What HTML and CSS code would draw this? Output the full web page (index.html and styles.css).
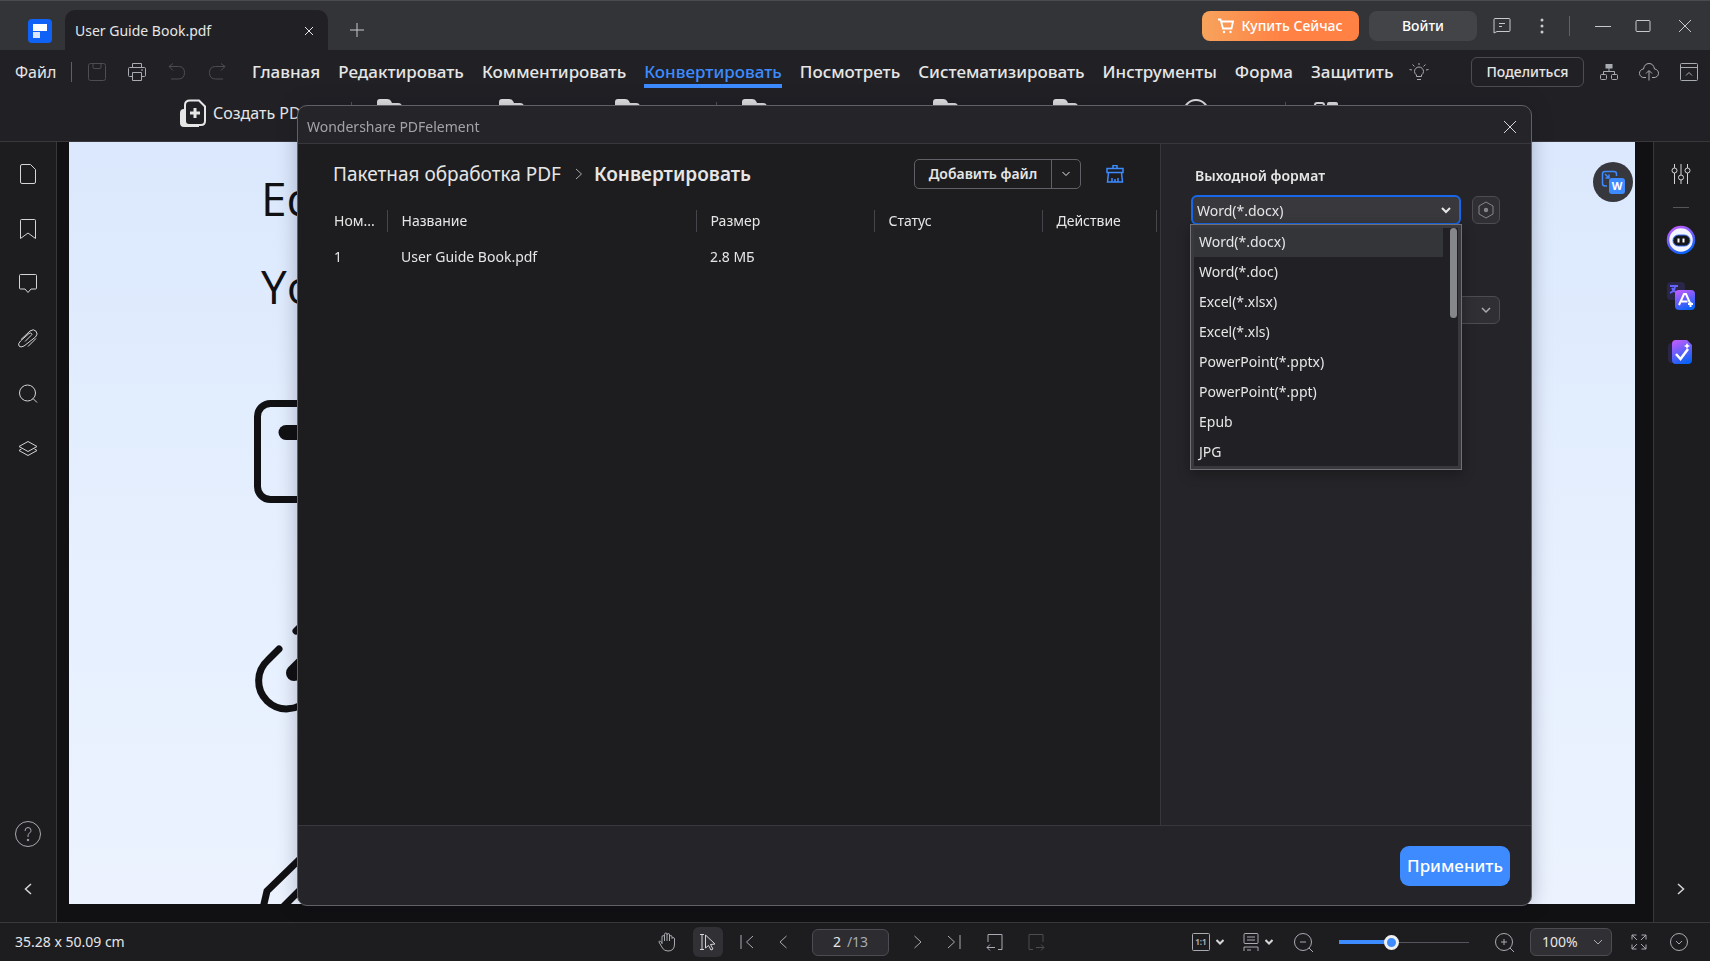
FILE: index.html
```html
<!DOCTYPE html>
<html lang="ru">
<head>
    <meta charset="UTF-8">
    <meta name="viewport" content="width=device-width, initial-scale=1.0">
    <title>Wondershare PDFelement</title>
    <link rel="stylesheet" href="styles.css">
</head>
<body>
<div class="app">
    <!-- Заголовок окна -->
    <header class="titlebar">
        <svg class="logo" viewBox="0 0 24 24"><rect width="24" height="24" rx="4" fill="#0f62f5"/><path d="M5 5h14v7H5z" fill="#fff"/><path d="M5 13h7v6H5z" fill="#dbe7ff"/></svg>
        <div class="tab">
            <span>User Guide Book.pdf</span>
            <button class="tab-close" aria-label="Закрыть вкладку"><svg class="icon" width="10" height="10" viewBox="0 0 10 10"><path d="M1 1l8 8M9 1L1 9"/></svg></button>
        </div>
        <button class="tab-add" aria-label="Новая вкладка"><svg class="icon" width="14" height="14" viewBox="0 0 14 14"><path d="M7 0v14M0 7h14"/></svg></button>
        <div class="window-tools">
            <button class="buy"><svg class="icon" width="16" height="16" viewBox="0 0 16 16"><path d="M0 1.500h2.500l2.500 9h8.500l1.500-7H3.500" stroke-width="1.800"/><circle cx="6" cy="14" r="1.200" fill="#fff" stroke="none"/><circle cx="12.500" cy="14" r="1.200" fill="#fff" stroke="none"/></svg>Купить Сейчас</button>
            <button class="login">Войти</button>
            <button class="tool-chat" aria-label="Сообщения"><svg class="icon" width="18" height="18" viewBox="0 0 18 18"><path d="M1 16V2.500q0-1 1-1h14q1 0 1 1v11q0 1-1 1H4zM6 6.500h6M6 9.500h3"/></svg></button>
            <button class="tool-dots" aria-label="Ещё"><svg width="4" height="16" viewBox="0 0 4 16" fill="currentColor"><circle cx="2" cy="2" r="1.500"/><circle cx="2" cy="8" r="1.500"/><circle cx="2" cy="14" r="1.500"/></svg></button>
            <span class="divider"></span>
            <button class="window-min" aria-label="Свернуть"><svg class="icon" width="16" height="16" viewBox="0 0 16 16"><path d="M0 8.500h16"/></svg></button>
            <button class="window-max" aria-label="Развернуть"><svg class="icon" width="16" height="16" viewBox="0 0 16 16"><rect x="1" y="2.500" width="14" height="11" rx="1"/></svg></button>
            <button class="window-close" aria-label="Закрыть"><svg class="icon" width="14" height="14" viewBox="0 0 14 14"><path d="M1 1l12 12M13 1L1 13"/></svg></button>
        </div>
    </header>

    <!-- Меню -->
    <div class="menubar">
        <button class="file">Файл</button>
        <span class="divider"></span>
        <div class="quick">
            <button class="off" aria-label="Сохранить"><svg class="icon" width="18" height="18" viewBox="0 0 18 18"><rect x=".5" y=".5" width="17" height="17" rx="2"/><path d="M5 .500v4q0 1 1 1h6q1 0 1-1v-4"/></svg></button>
            <button aria-label="Печать"><svg class="icon" width="18" height="18" viewBox="0 0 18 18"><path d="M4.500 4.500v-4h9v4M4.500 13.500h-3q-1 0-1-1v-7q0-1 1-1h15q1 0 1 1v7q0 1-1 1h-3M4.500 9.500h9v8h-9zM13 7h2"/></svg></button>
            <button class="off" aria-label="Отменить"><svg class="icon" width="18" height="18" viewBox="0 0 18 18"><path d="M5 .500l-4 3 4 4M1 3.500h9.500q6 0 6 6.200t-6 6.300H3"/></svg></button>
            <button class="off" aria-label="Повторить"><svg class="icon" width="18" height="18" viewBox="0 0 18 18"><path d="M13 .500l4 3-4 4M17 3.500H7.500q-6 0-6 6.200t6 6.300H15"/></svg></button>
        </div>
        <nav class="menu">
            <a href="#">Главная</a>
            <a href="#">Редактировать</a>
            <a href="#">Комментировать</a>
            <a href="#" class="active">Конвертировать</a>
            <a href="#">Посмотреть</a>
            <a href="#">Систематизировать</a>
            <a href="#">Инструменты</a>
            <a href="#">Форма</a>
            <a href="#">Защитить</a>
        </nav>
        <button class="tips" aria-label="Подсказки"><svg class="icon" width="20" height="20" viewBox="0 0 20 20"><path d="M7.500 14.500v-1.500Q5.500 11.500 5.500 9.500a4.500 4.500 0 0 1 9 0q0 2-2 3.500v1.500zM8 17.500h4M10 1v2M3.500 2.500l2 2M16.500 2.500l-2 2M.500 7.500l2.500.500M19.500 7.500l-2.500.500"/></svg></button>
        <div class="menu-right">
            <button class="share">Поделиться</button>
            <button aria-label="Структура"><svg class="icon" width="18" height="18" viewBox="0 0 18 18"><rect x="6" y="1.500" width="6" height="3.500" fill="currentColor"/><rect x=".5" y="11.500" width="6" height="5" rx="1"/><rect x="11.500" y="11.500" width="6" height="5" rx="1"/><path d="M9 5v3.500M3.500 11.500v-3h11v3"/></svg></button>
            <button aria-label="Облако"><svg class="icon" width="20" height="20" viewBox="0 0 20 20"><path d="M7 15.500H5A4.200 4.200 0 0 1 4.500 7Q5.500 1.500 10 1.500T15.500 7A4.200 4.200 0 0 1 15 15.500h-2M10 18.500V9M7 11.500L10 8.500l3 3"/></svg></button>
            <button aria-label="Скрыть панель"><svg class="icon" width="18" height="18" viewBox="0 0 18 18"><rect x=".5" y=".5" width="17" height="17" rx="1"/><path d="M.500 4.500h17M6 12.500l3-3 3 3"/></svg></button>
        </div>
    </div>

    <!-- Лента инструментов -->
    <div class="ribbon">
        <button class="create"><svg width="26" height="28" viewBox="0 0 26 28"><path d="M5 10H4q-4 0-4 4v10q0 4 4 4h15v-2H9q-4 0-4-4z" fill="#e6e6e6"/><path d="M10 1.500h9l6 6V22q0 4-4 4H9q-4 0-4-4V6q0-4.500 5-4.500z" fill="#212125" stroke="#e6e6e6" stroke-width="2"/><path d="M15 9v10M10 14h10" stroke="#e6e6e6" stroke-width="3"/></svg>Создать PDF</button>
        <svg class="ribbon-icons" width="994" height="28" viewBox="0 0 994 28" fill="#e6e6e6">
            <path id="folder" d="M30 27V3q0-3 3-3h7q3 0 4 2l1 2h6q4 0 4 4v19z"/>
            <use href="#folder" x="122"/><use href="#folder" x="238"/><use href="#folder" x="365"/><use href="#folder" x="556"/><use href="#folder" x="676"/>
            <circle cx="849" cy="13" r="12" fill="none" stroke="#e6e6e6" stroke-width="2"/>
            <rect x="968" y="4" width="9" height="9" rx="2" fill="none" stroke="#e6e6e6" stroke-width="2"/><rect x="980" y="3" width="11" height="11" rx="2"/>
            <path d="M4 3h1v20H4zM369 3h1v20h-1zM938 3h1v20h-1z" fill="#55565b"/>
        </svg>
    </div>

    <div class="workspace">
        <!-- Левая панель -->
        <aside class="rail rail-left">
            <button aria-label="Миниатюры"><svg class="icon" width="20" height="22" viewBox="0 0 20 22"><path d="M4 1.500h8.500l5 5V19q0 1.500-1.500 1.500H4Q2.500 20.500 2.500 19V3Q2.500 1.500 4 1.500z"/></svg></button>
            <button aria-label="Закладки"><svg class="icon" width="20" height="22" viewBox="0 0 20 22"><path d="M2.500 20.500V2.500q0-1 1-1h13q1 0 1 1v18L10 15z"/></svg></button>
            <button aria-label="Комментарии"><svg class="icon" width="20" height="22" viewBox="0 0 20 22"><path d="M2.500 1.500h15q1 0 1 1V15q0 1-1 1H13l-3 3.500L7 16H2.500q-1 0-1-1V2.500q0-1 1-1z"/></svg></button>
            <button aria-label="Вложения"><svg class="icon" width="22" height="22" viewBox="0 0 22 22"><path d="M8 13.500l6-6q1.500-1 .5-2t-2.500 0L3.500 13q-3 3-1.500 5t5 0L18.500 9q3-3 .5-5.800t-6-.2L4 11.500M11 18.500l8-8"/></svg></button>
            <button aria-label="Поиск"><svg class="icon" width="20" height="22" viewBox="0 0 20 22"><circle cx="9.500" cy="10" r="8"/><path d="M15 15.500l4 4"/></svg></button>
            <button aria-label="Слои"><svg class="icon" width="22" height="22" viewBox="0 0 22 22"><path d="M11 3.500l9 5-9 5-9-5zM4.500 11L2 12.500l9 5 9-5-2.500-1.500"/></svg></button>
            <button class="help" aria-label="Справка"><svg class="icon" width="26" height="26" viewBox="0 0 26 26"><circle cx="13" cy="13" r="12.500"/><path d="M10 10q0-3.500 3-3.500t3 3q0 1.500-1.500 2.500T13 15v1"/><circle cx="13" cy="19" r=".8" fill="currentColor"/></svg></button>
            <button aria-label="Свернуть панель"><svg class="icon" width="8" height="12" viewBox="0 0 8 12"><path d="M7 1L1.500 6 7 11" stroke-width="1.500"/></svg></button>
        </aside>

        <!-- Страница документа -->
        <main class="viewer">
            <div class="page">
                <p>Ed</p>
                <p>Yo</p>
                <svg width="140" height="514" viewBox="240 390 140 514" fill="none" stroke="#111113" stroke-width="7">
                    <rect x="257.500" y="403.500" width="110" height="96" rx="13"/>
                    <path d="M286 432.500h50" stroke-width="15" stroke-linecap="round"/>
                    <path d="M279 649l-11 11A28 28 0 1 0 308 699M296 631l10-10" stroke-linecap="round"/>
                    <path d="M294 673l14-14" stroke-width="16" stroke-linecap="round"/>
                    <path d="M340 820l-73 71-7 30M350 840l-71 71"/>
                </svg>
            </div>
            <button class="to-word" aria-label="В Word"><svg width="40" height="40" viewBox="0 0 40 40"><path d="M14 24h-2q-2.500 0-2.500-2.500V12q0-2.500 2.500-2.500h9q2.500 0 2.500 2.500v2M12 12l4 4M16 12.500V16h-3.500" fill="none" stroke="#3d8bff" stroke-width="1.500"/><rect x="16" y="16" width="16" height="16" rx="3" fill="#3d8bff"/><text x="24" y="28" text-anchor="middle">W</text></svg></button>
        </main>

        <!-- Правая панель -->
        <aside class="rail rail-right">
            <svg width="0" height="0" class="defs"><defs><linearGradient id="violet" x1="0.200" y1="0" x2="0.600" y2="1"><stop offset="0" stop-color="#c05cff"/><stop offset="1" stop-color="#0b62f6"/></linearGradient></defs></svg>
            <button aria-label="Настройки"><svg class="icon" width="20" height="22" viewBox="0 0 20 22"><path d="M3.500 1v4M3.500 10v11M10 1v11M10 17v4M16.500 1v4M16.500 10v11"/><circle cx="3.500" cy="7.500" r="2.500"/><circle cx="10" cy="14.500" r="2.500"/><circle cx="16.500" cy="7.500" r="2.500"/></svg></button>
            <hr>
            <button aria-label="AI помощник"><svg width="30" height="30" viewBox="0 0 30 30"><circle cx="15" cy="15" r="13" fill="#f2f4ff" stroke="url(#violet)" stroke-width="2.500"/><rect x="7" y="10" width="17" height="11" rx="5.500" fill="#15151c" stroke="#326bf5"/><path d="M12.500 13.500v4M17.500 13.500v4" stroke="#fff" stroke-width="2"/></svg></button>
            <button aria-label="AI перевод"><svg width="28" height="28" viewBox="0 0 28 28"><rect width="18" height="18" rx="4" fill="#29264a"/><path d="M3 4h8M8 4q0 5-5 7M5 6q2 4 6 5" stroke="#6564ff" stroke-width="1.800" fill="none"/><rect x="8" y="8" width="20" height="20" rx="4" fill="url(#violet)"/><path d="M12 23l5-11h2l4 9M14.500 19.500h6M21 22h5M23.500 20v5" stroke="#fff" stroke-width="2" fill="none"/></svg></button>
            <button aria-label="AI проверка"><svg width="26" height="28" viewBox="0 -2 26 28"><rect x="0" y="4" width="15" height="20" rx="4" fill="#29264a"/><path d="M8 1h11l5 5v15q0 4-4 4H8q-4 0-4-4V5q0-4 4-4z" fill="url(#violet)"/><path d="M8 15l4.500 5L20 10" stroke="#fff" stroke-width="2.500" fill="none"/><path d="M19 4l1 2 2 1-2 1-1 2-1-2-2-1 2-1z" fill="#fff"/></svg></button>
            <button class="rail-end" aria-label="Свернуть панель"><svg class="icon" width="8" height="12" viewBox="0 0 8 12"><path d="M1 1l5.500 5L1 11" stroke-width="1.500"/></svg></button>
        </aside>
    </div>

    <!-- Строка состояния -->
    <footer class="status">
        <span class="status-size">35.28 x 50.09 cm</span>
        <div class="pager">
            <button aria-label="Рука"><svg class="icon" width="18" height="20" viewBox="0 0 18 20"><path d="M4 12V5q0-1.500 1.200-1.500T6.500 5v4M6.500 5V2.500Q6.500 1 7.800 1T9 2.500V9M9 3q0-1.500 1.300-1.500T11.500 3v6M11.500 5q0-1.500 1.300-1.500T14 5v1.500q0-1 1.200-1T16.500 7v5q0 7-6.500 7-4 0-5.500-3l-3-5q-1-1.500 0-2t2.500 2"/></svg></button>
            <button class="pressed" aria-label="Выделение"><svg class="icon" width="18" height="20" viewBox="0 0 18 20"><path d="M1 2.500h4M3 2.500v15M1 17.500h4M6.500 3l9.500 9-4.500.500 2.500 4.500-2 1-2.500-4.500L6.500 16z"/></svg></button>
            <button aria-label="Первая страница"><svg class="icon" width="14" height="16" viewBox="0 0 14 16"><path d="M1 1v14M13 2L6.500 8l6.500 6"/></svg></button>
            <button aria-label="Предыдущая"><svg class="icon" width="8" height="16" viewBox="0 0 8 16"><path d="M7.500 2L1 8l6.500 6"/></svg></button>
            <label class="page-box"><input type="text" value="2" aria-label="Страница"><span>/13</span></label>
            <button aria-label="Следующая"><svg class="icon" width="8" height="16" viewBox="0 0 8 16"><path d="M.500 2L7 8l-6.500 6"/></svg></button>
            <button aria-label="Последняя страница"><svg class="icon" width="14" height="16" viewBox="0 0 14 16"><path d="M13 1v14M1 2l6.500 6L1 14"/></svg></button>
            <button aria-label="Назад"><svg class="icon" width="17" height="18" viewBox="0 0 17 18"><path d="M2 9V1.500h14v15h-4M9 14.500H1M4 11.500l-3 3 3 3"/></svg></button>
            <button class="off" aria-label="Вперёд"><svg class="icon" width="17" height="18" viewBox="0 0 17 18"><path d="M15 9V1.500H1v15h4M8 14.500h8M13 11.500l3 3-3 3"/></svg></button>
        </div>
        <div class="zoom">
            <button class="with-caret" aria-label="Реальный размер"><svg class="icon" width="18" height="18" viewBox="0 0 18 18"><rect x=".5" y=".5" width="17" height="17" rx="1"/><text x="9" y="12" text-anchor="middle">1:1</text></svg><svg class="icon caret" width="8" height="6" viewBox="0 0 8 6"><path d="M.500 1L4 4.500 7.500 1"/></svg></button>
            <button class="with-caret" aria-label="Вид страницы"><svg class="icon" width="16" height="18" viewBox="0 0 16 18"><rect x="1" y=".5" width="14" height="10" rx="1"/><path d="M4 4h8M4 7h8M1 18v-4h14v4M4 17h4"/></svg><svg class="icon caret" width="8" height="6" viewBox="0 0 8 6"><path d="M.500 1L4 4.500 7.500 1"/></svg></button>
            <button class="zoom-out" aria-label="Уменьшить"><svg class="icon" width="19" height="19" viewBox="0 0 19 19"><circle cx="9" cy="9" r="8.500"/><path d="M15 15l4 4M6 9h6"/></svg></button>
            <input class="zoom-slider" type="range" min="0" max="100" value="39" aria-label="Масштаб">
            <button aria-label="Увеличить"><svg class="icon" width="19" height="19" viewBox="0 0 19 19"><circle cx="9" cy="9" r="8.500"/><path d="M15 15l4 4M6 9h6M9 6v6"/></svg></button>
            <div class="select zoom-select">
                <select aria-label="Процент"><option>100%</option></select>
                <svg class="icon" width="10" height="7" viewBox="0 0 10 7"><path d="M1 1l4 4 4-4"/></svg>
            </div>
            <button class="full" aria-label="Во весь экран"><svg class="icon" width="16" height="16" viewBox="0 0 16 16"><path d="M1 5.500V1h4.500M1 1l5 5M10.500 1H15v4.500M15 1l-5 5M15 10.500V15h-4.500M15 15l-5-5M5.500 15H1v-4.500M1 15l5-5"/></svg></button>
            <button aria-label="Скрыть"><svg class="icon" width="18" height="18" viewBox="0 0 18 18"><circle cx="9" cy="9" r="8.500"/><path d="M6 8l3 3 3-3"/></svg></button>
        </div>
    </footer>
</div>

<!-- Диалог пакетной обработки -->
<div class="dialog" role="dialog" aria-labelledby="dialog-title">
    <div class="dialog-header">
        <span id="dialog-title">Wondershare PDFelement</span>
        <button aria-label="Закрыть"><svg class="icon" width="14" height="14" viewBox="0 0 14 14"><path d="M1 1l12 12M13 1L1 13"/></svg></button>
    </div>
    <div class="dialog-body">
        <section class="batch">
            <div class="batch-top">
                <a href="#" class="crumb">Пакетная обработка PDF</a>
                <svg class="icon crumb-arrow" width="8" height="12" viewBox="0 0 8 12"><path d="M1 1l5.500 5L1 11"/></svg>
                <h1>Конвертировать</h1>
                <div class="add">
                    <button class="add-file">Добавить файл</button>
                    <button class="add-more" aria-label="Другие варианты"><svg class="icon" width="8" height="6" viewBox="0 0 8 6"><path d="M.500 1L4 4.500 7.500 1"/></svg></button>
                </div>
                <button class="clear" aria-label="Очистить список"><svg class="icon" width="18" height="18" viewBox="0 0 18 18"><path d="M7 3.500v-3h4v3M1 3.500h16v4H1zM2.500 7.500L1.500 17h15l-1-9.500M6 17v-4M9 17v-3M12 17v-4" stroke-width="1.500"/></svg></button>
            </div>
            <table class="files">
                <thead>
                <tr><th class="col-num">Ном...</th><th class="col-name">Название</th><th class="col-size">Размер</th><th class="col-status">Статус</th><th class="col-action">Действие</th></tr>
                </thead>
                <tbody>
                <tr><td>1</td><td>User Guide Book.pdf</td><td>2.8 МБ</td><td></td><td></td></tr>
                </tbody>
            </table>
        </section>
        <aside class="options">
            <label for="format">Выходной формат</label>
            <div class="format-row">
                <div class="format">
                    <div class="select format-select">
                        <select id="format"><option>Word(*.docx)</option></select>
                        <svg class="icon" width="10" height="7" viewBox="0 0 10 7"><path d="M1 1l4 4 4-4" stroke-width="2"/></svg>
                    </div>
                    <ul class="format-list" role="listbox" aria-label="Выходной формат">
                        <li role="option" aria-selected="true">Word(*.docx)</li>
                        <li role="option">Word(*.doc)</li>
                        <li role="option">Excel(*.xlsx)</li>
                        <li role="option">Excel(*.xls)</li>
                        <li role="option">PowerPoint(*.pptx)</li>
                        <li role="option">PowerPoint(*.ppt)</li>
                        <li role="option">Epub</li>
                        <li role="option">JPG</li>
                    </ul>
                </div>
                <button class="format-settings" aria-label="Параметры формата"><svg class="icon" width="18" height="18" viewBox="0 0 18 18"><path d="M9 1l7 4v8l-7 4-7-4V5z"/><circle cx="9" cy="9" r="2.200" fill="currentColor" stroke="none"/></svg></button>
            </div>
            <div class="select folder-select">
                <select aria-label="Папка вывода"><option></option></select>
                <svg class="icon" width="10" height="7" viewBox="0 0 10 7"><path d="M1 1l4 4 4-4" stroke-width="1.500"/></svg>
            </div>
        </aside>
    </div>
    <div class="dialog-footer">
        <button class="apply">Применить</button>
    </div>
</div>
</body>
</html>
```

FILE: styles.css
```css
/* Цвета тёмной темы */
:root {
    --color-title: #333437;
    --color-bar: #212125;
    --color-panel: #1d1d1f;
    --color-dialog: #252529;
    --color-line: #37373c;
    --color-text: #e6e6e6;
    --color-icon: #a9abb2;
    --color-accent: #3d8bff;
}

* {
    box-sizing: border-box;
}

body {
    margin: 0;
    background: #111113;
    color: var(--color-text);
    font: 15px/20px "Noto Sans", "Open Sans", sans-serif;
    overflow: hidden;
}

button, select, input {
    font: inherit;
    color: inherit;
}

button {
    display: flex;
    align-items: center;
    justify-content: center;
    padding: 0;
    border: none;
    background: none;
    cursor: pointer;
    white-space: nowrap;
    flex-shrink: 0;
}

a {
    color: inherit;
    text-decoration: none;
}

svg {
    display: block;
    flex-shrink: 0;
}

.icon {
    fill: none;
    stroke: currentColor;
}

.divider {
    width: 1px;
    height: 20px;
    background: #606166;
}

.off {
    color: #4c4d52;
}

.app {
    display: flex;
    flex-direction: column;
    height: 100vh;
}

/* Заголовок окна */
.titlebar {
    display: flex;
    align-items: flex-end;
    height: 50px;
    padding-left: 28px;
    background: var(--color-title);
    border-top: 1px solid #4a4b4e;
    color: #c8c9cd;
}

.logo {
    width: 24px;
    height: 24px;
    margin: 0 13px 7px 0;
}

.tab {
    display: flex;
    align-items: center;
    justify-content: space-between;
    width: 263px;
    height: 40px;
    padding: 2px 14px 0 10px;
    border-radius: 10px 10px 0 0;
    background: var(--color-bar);
    color: var(--color-text);
    font-size: 14px;
}

.tab-add {
    width: 57px;
    height: 40px;
}

.window-tools {
    display: flex;
    align-items: center;
    height: 48px;
    margin-left: auto;
    padding-right: 18px;
}

.buy, .login {
    height: 30px;
    border-radius: 8px;
    font-size: 14px;
    font-weight: 500;
    color: #fff;
}

.buy {
    gap: 7px;
    width: 157px;
    margin-right: 10px;
    background: linear-gradient(90deg, #f7a35c, #ff8244 50%);
}

.login {
    width: 108px;
    margin-right: 16px;
    background: #434448;
}

.tool-dots {
    margin: 0 25px 0 29px;
}

.window-min {
    margin: 0 24px 0 25px;
}

.window-max {
    margin-right: 27px;
}

/* Меню */
.menubar {
    display: flex;
    align-items: center;
    height: 45px;
    padding: 0 12px 2px 15px;
    background: var(--color-bar);
    color: var(--color-icon);
}

.file {
    width: 56px;
    justify-content: flex-start;
    color: var(--color-text);
    font-size: 16px;
}

.quick {
    display: flex;
    gap: 22px;
    margin: 0 26px 0 16px;
}

.menu {
    display: flex;
    gap: 18px;
    color: var(--color-text);
    font-size: 17px;
    font-weight: 500;
    white-space: nowrap;
}

.menu a {
    padding: 6px 0 2px;
    border-bottom: 4px solid transparent;
}

.menu .active {
    color: var(--color-accent);
    border-color: var(--color-accent);
}

.tips {
    margin-left: 16px;
}

.menu-right {
    display: flex;
    align-items: center;
    gap: 21px;
    margin-left: auto;
}

.share {
    width: 113px;
    height: 30px;
    margin-right: -5px;
    border: 1px solid #4c4d52;
    border-radius: 6px;
    color: var(--color-text);
    font-size: 14px;
    font-weight: 500;
}

/* Лента */
.ribbon {
    display: flex;
    align-items: flex-start;
    height: 47px;
    padding: 4px 0 0 180px;
    background: var(--color-bar);
    border-bottom: 1px solid var(--color-line);
}

.create {
    gap: 7px;
    width: 167px;
    justify-content: flex-start;
    font-size: 16px;
}

/* Рабочая область */
.workspace {
    display: flex;
    flex: 1;
    min-height: 0;
}

.rail {
    display: flex;
    flex-direction: column;
    align-items: center;
    width: 57px;
    padding: 21px 0 27px;
    background: var(--color-panel);
}

.rail-left {
    gap: 33px;
    border-right: 1px solid var(--color-line);
    color: #d4d5d8;
}

.help {
    margin-top: auto;
    margin-bottom: 3px;
    color: var(--color-icon);
}

.rail-right {
    gap: 27px;
    padding-right: 3px;
    border-left: 1px solid var(--color-line);
    color: #d4d5d8;
}

.rail-right hr {
    width: 16px;
    margin: -5px 0 -10px;
    border: none;
    border-top: 1px solid #55565b;
}

.defs {
    position: absolute;
}

.rail-end {
    margin-top: auto;
}

.viewer {
    position: relative;
    flex: 1;
    padding: 0 18px 18px 12px;
}

.page {
    height: 100%;
    padding: 12px 0 0 171px;
    overflow: hidden;
    background: linear-gradient(#dbe8fd, #e5effe 50%, #ecf3ff);
    color: #111113;
}

.page p {
    margin: 0;
    padding-left: 21px;
    font-family: "Open Sans", sans-serif;
    font-size: 46px;
    line-height: 88px;
}

.page svg {
    margin-top: 60px;
}

.to-word {
    position: absolute;
    top: 20px;
    right: 20px;
    border-radius: 50%;
    background: #37383d;
}

.to-word text {
    fill: #fff;
    font-size: 11px;
    font-weight: bold;
}

/* Строка состояния */
.status {
    display: grid;
    grid-template-columns: 1fr auto 1fr;
    align-items: center;
    height: 39px;
    padding: 0 22px 0 15px;
    background: var(--color-panel);
    border-top: 1px solid var(--color-line);
    color: var(--color-icon);
}

.status-size {
    color: var(--color-text);
    font-size: 14px;
}

.pager {
    display: flex;
    align-items: center;
    gap: 25px;
}

.pager .pressed {
    width: 30px;
    height: 30px;
    margin: 0 -8px;
    border-radius: 6px;
    background: #303035;
    color: #d4d5d8;
}

.page-box {
    display: flex;
    align-items: center;
    justify-content: center;
    gap: 4px;
    width: 77px;
    height: 27px;
    border: 1px solid #4c4d52;
    border-radius: 6px;
    background: #2c2c31;
    font-size: 14px;
}

.page-box input {
    width: 10px;
    padding: 0;
    border: none;
    background: none;
    color: var(--color-text);
}

.zoom {
    display: flex;
    align-items: center;
    justify-content: flex-end;
    gap: 19px;
}

.with-caret {
    gap: 6px;
}

.with-caret text {
    fill: currentColor;
    stroke: none;
    font-size: 8px;
    font-weight: bold;
}

.caret {
    color: #d4d5d8;
    stroke-width: 2;
}

.zoom-out {
    margin-left: 2px;
}

/* Ползунок масштаба */
.zoom-slider {
    appearance: none;
    width: 130px;
    height: 16px;
    margin: 0 7px;
    background: linear-gradient(90deg, var(--color-accent) 40%, transparent 40%) center / 100% 4px no-repeat, linear-gradient(#55565b, #55565b) center / 100% 1px no-repeat;
}

.zoom-slider::-webkit-slider-thumb {
    appearance: none;
    width: 15px;
    height: 15px;
    border: 3px solid #f0f0f0;
    border-radius: 50%;
    background: var(--color-accent);
}

.select {
    display: flex;
    align-items: center;
    border: 1px solid #4c4d52;
    border-radius: 6px;
    background: #2f2f34;
}

.select select {
    appearance: none;
    flex: 1;
    min-width: 0;
    padding: 0;
    border: none;
    outline: none;
    background: none;
}

.zoom-select {
    width: 82px;
    height: 28px;
    margin-left: -3px;
    padding: 0 8px 0 11px;
    font-size: 14px;
}

.zoom-select select {
    color: var(--color-text);
}

.full {
    margin-right: 4px;
}

/* Диалог */
.dialog {
    position: fixed;
    inset: 105px 178px 55px 297px;
    display: flex;
    flex-direction: column;
    border: 1px solid #606166;
    border-radius: 10px;
    background: var(--color-dialog);
    box-shadow: 0 0 20px rgba(0, 0, 30, 0.25);
}

.dialog-header {
    display: flex;
    align-items: center;
    justify-content: space-between;
    height: 38px;
    padding: 4px 14px 0 9px;
    border-bottom: 1px solid var(--color-line);
    font-size: 14px;
    color: #a2a3a9;
}

.dialog-header button {
    color: #d4d5d8;
}

.dialog-body {
    display: flex;
    flex: 1;
}

.batch {
    flex: 1;
    padding: 15px 3px 0 22px;
    background: var(--color-panel);
}

.batch-top {
    display: flex;
    align-items: center;
    height: 30px;
    padding: 0 33px 0 13px;
    font-size: 19px;
}

.crumb-arrow {
    margin: 0 11px 0 14px;
    color: var(--color-icon);
}

.batch h1 {
    margin: 0;
    font-size: 19px;
    font-weight: 600;
}

.add {
    display: flex;
    margin-left: auto;
    height: 30px;
    border: 1px solid #606166;
    border-radius: 5px;
    font-size: 14px;
}

.add-file {
    width: 136px;
    font-weight: 600;
}

.add-more {
    width: 29px;
    border-left: 1px solid #606166;
}

.clear {
    margin-left: 25px;
    color: var(--color-accent);
}

.files {
    width: 100%;
    margin-top: 21px;
    border-collapse: collapse;
    table-layout: fixed;
    font-size: 14px;
}

.files th, .files td {
    padding: 0 0 0 14px;
    font-weight: 400;
    text-align: left;
}

.files th {
    height: 22px;
    border-right: 1px solid #45464b;
}

.files td {
    padding-top: 15px;
}

.col-num {
    width: 67px;
}

.col-name {
    width: 309px;
}

.col-size {
    width: 178px;
}

.col-status {
    width: 168px;
}

/* Настройки формата */
.options {
    width: 371px;
    padding: 22px 31px 0 30px;
    border-left: 1px solid var(--color-line);
    font-size: 14px;
}

.options label {
    display: block;
    margin: 0 0 9px 4px;
    font-weight: 600;
}

.format-row {
    display: flex;
    align-items: center;
    justify-content: space-between;
}

.format {
    position: relative;
    width: 270px;
}

.format-select {
    height: 30px;
    padding: 1px 8px 0 4px;
    border: 2px solid #1767e8;
    border-radius: 6px;
    background: #38383d;
}

/* Раскрытый список поверх настроек */
.format-list {
    position: absolute;
    z-index: 1;
    top: 29px;
    left: -1px;
    right: -1px;
    margin: 0;
    padding: 0 14px 0 0;
    border: 1px solid #707177;
    outline: 3px solid #38383d;
    outline-offset: -4px;
    background: #212125;
    list-style: none;
    box-shadow: 0 4px 12px rgba(0, 0, 0, 0.3);
}

.format-list::after {
    content: "";
    position: absolute;
    top: 3px;
    right: 4px;
    width: 7px;
    height: 90px;
    border-radius: 4px;
    background: #86878a;
}

.format-list li {
    height: 30px;
    margin-right: 4px;
    padding: 0 8px;
    line-height: 30px;
}

.format-list li:first-child {
    height: 32px;
    padding-top: 2px;
    background: #343539;
}

.format-list li:last-child {
    margin-bottom: 2px;
}

.format-settings {
    width: 28px;
    height: 28px;
    border: 1px solid #4c4d52;
    border-radius: 6px;
    background: #2f2f34;
    color: #86878a;
}

.folder-select {
    height: 28px;
    margin-top: 71px;
    padding: 0 8px;
    background: #303034;
    color: var(--color-icon);
}

/* Кнопка применения */
.dialog-footer {
    display: flex;
    align-items: center;
    justify-content: flex-end;
    height: 80px;
    padding: 0 21px 0 0;
    border-top: 1px solid var(--color-line);
}

.apply {
    width: 110px;
    height: 40px;
    border-radius: 9px;
    background: var(--color-accent);
    color: #fff;
    font-size: 17px;
    font-weight: 500;
}
```
